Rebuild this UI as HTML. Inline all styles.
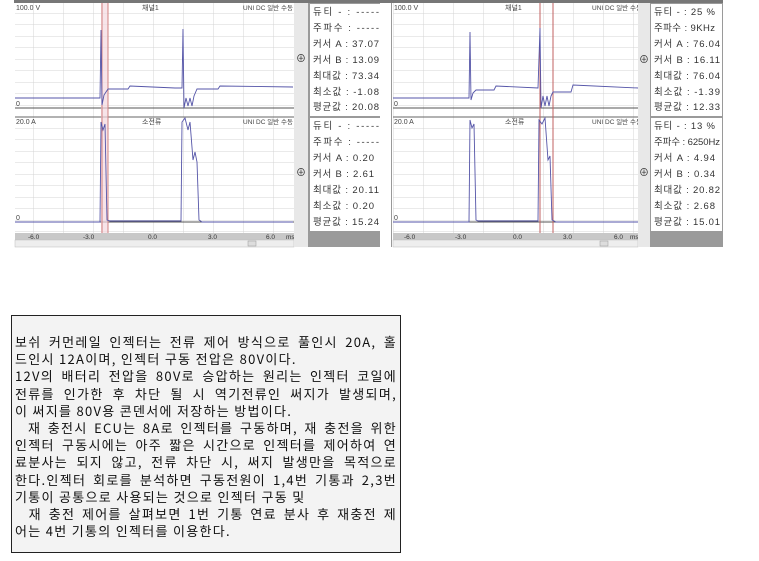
<!DOCTYPE html>
<html><head><meta charset="utf-8"><style>
body{margin:0;background:#fff;width:759px;height:561px;overflow:hidden;font-family:"Liberation Sans","Noto Sans CJK KR",sans-serif}
#tb{position:absolute;left:11px;top:315px;width:390px;height:238px;border:1px solid #222;background:#f3f3f3;box-sizing:border-box;padding:17px 3px 0 3px}
#tb div{font-family:"Noto Sans CJK KR",sans-serif;font-size:13px;line-height:17.2px;height:17.2px;text-align:justify;text-align-last:justify;white-space:nowrap;color:#111;letter-spacing:1.3px}
#tb div.l{text-align-last:left}
</style></head><body>
<svg width="759" height="250" style="position:absolute;left:0;top:0" font-family="Liberation Sans, Noto Sans CJK KR, sans-serif">
<defs>
<pattern id="g" x="3" y="1.5" width="30" height="11.5" patternUnits="userSpaceOnUse"><path d="M0 0H30M0 0V11.5" stroke="#d4d4d4" stroke-width="1" fill="none"/></pattern>
</defs>
<rect x="14" y="0" width="366" height="3" fill="#777"/>
<rect x="15" y="3" width="279" height="230" fill="#fff"/>
<rect x="15" y="3" width="279" height="230" fill="url(#g)"/>
<line x1="15" y1="117" x2="294" y2="117" stroke="#666"/>
<line x1="15" y1="108" x2="294" y2="108" stroke="#555"/>
<line x1="15" y1="222" x2="294" y2="222" stroke="#555"/>
<rect x="101" y="3" width="7" height="230" fill="#f4d8e0" opacity=".7"/>
<line x1="102" y1="3" x2="102" y2="233" stroke="#d08080"/>
<line x1="108" y1="3" x2="108" y2="233" stroke="#d08080"/>
<text x="16" y="10" font-size="7" fill="#444">100.0 V</text>
<text x="142" y="10" font-size="7" fill="#444">채널1</text>
<text x="243" y="10" font-size="6.5" fill="#444">UNI DC 일반 수동</text>
<text x="16" y="124" font-size="7" fill="#444">20.0 A</text>
<text x="142" y="124" font-size="7" fill="#444">소전류</text>
<text x="243" y="124" font-size="6.5" fill="#444">UNI DC 일반 수동</text>
<text x="16" y="106" font-size="7" fill="#444">0</text>
<text x="16" y="220" font-size="7" fill="#444">0</text>
<polyline fill="none" stroke="#5555a8" stroke-width=".9" points="15,98 100,98 101,30 102,105 104,95 108,89 128,89 130,86 175,88 182,88 183,29 184,108 186,98 188,106 190,98 192,106 194,96 197,89 218,89 220,86 293,87"/>
<polyline fill="none" stroke="#5555a8" stroke-width=".9" points="15,222 100,222 101,122 103,130 105,124 107,220 110,221 181,221 182,122 185,118 188,130 190,122 193,160 195,152 197,162 199,220 202,222 293,222"/>
<rect x="15" y="233" width="279" height="7" fill="#c8c8c8"/>
<g font-size="6.5" fill="#333"><text x="28" y="239">-6.0</text><text x="83" y="239">-3.0</text><text x="148" y="239">0.0</text><text x="208" y="239">3.0</text><text x="266" y="239">6.0</text><text x="286" y="239">ms</text></g>
<rect x="15" y="240" width="279" height="7" fill="#eee" stroke="#bbb" stroke-width=".5"/>
<rect x="248" y="241" width="8" height="5" fill="#ddd" stroke="#999" stroke-width=".5"/>
<rect x="294" y="3" width="15" height="244" fill="#e8e8e8"/>
<text x="296" y="62" font-size="10" fill="#333">⊕</text>
<text x="296" y="176" font-size="10" fill="#333">⊕</text>
<rect x="308" y="3" width="73" height="244" fill="#9a9a9a"/>
<rect x="310" y="4" width="70" height="112" fill="#fff"/>
<rect x="310" y="118" width="70" height="113" fill="#fff"/>
<g font-size="9.5" fill="#333" lengthAdjust="spacing">
<text x="313" y="15" textLength="66">듀티 - : -----</text><text x="313" y="31" textLength="66">주파수 : -----</text><text x="313" y="47" textLength="66">커서 A : 37.07</text><text x="313" y="63" textLength="66">커서 B : 13.09</text><text x="313" y="79" textLength="66">최대값 : 73.34</text><text x="313" y="95" textLength="66">최소값 : -1.08</text><text x="313" y="110" textLength="66">평균값 : 20.08</text>
<text x="313" y="129" textLength="66">듀티 - : -----</text><text x="313" y="145" textLength="66">주파수 : -----</text><text x="313" y="161" textLength="61">커서 A : 0.20</text><text x="313" y="177" textLength="61">커서 B : 2.61</text><text x="313" y="193" textLength="66">최대값 : 20.11</text><text x="313" y="209" textLength="61">최소값 : 0.20</text><text x="313" y="225" textLength="66">평균값 : 15.24</text>
</g>
<rect x="380" y="0" width="343" height="3" fill="#777"/>
<rect x="380" y="3" width="12" height="244" fill="#fff"/>
<line x1="391.5" y1="3" x2="391.5" y2="247" stroke="#999"/>
<rect x="393" y="3" width="245" height="230" fill="#fff"/>
<rect x="393" y="3" width="245" height="230" fill="url(#g)"/>
<line x1="393" y1="117" x2="638" y2="117" stroke="#666"/>
<line x1="393" y1="108" x2="638" y2="108" stroke="#555"/>
<line x1="393" y1="222" x2="638" y2="222" stroke="#555"/>
<line x1="540" y1="3" x2="540" y2="233" stroke="#c06060"/>
<line x1="553" y1="3" x2="553" y2="233" stroke="#c06060"/>
<text x="394" y="10" font-size="7" fill="#444">100.0 V</text>
<text x="505" y="10" font-size="7" fill="#444">채널1</text>
<text x="592" y="10" font-size="6.5" fill="#444">UNI DC 일반 수동</text>
<text x="394" y="124" font-size="7" fill="#444">20.0 A</text>
<text x="505" y="124" font-size="7" fill="#444">소전류</text>
<text x="592" y="124" font-size="6.5" fill="#444">UNI DC 일반 수동</text>
<text x="394" y="106" font-size="7" fill="#444">0</text>
<text x="394" y="220" font-size="7" fill="#444">0</text>
<polyline fill="none" stroke="#5555a8" stroke-width=".9" points="393,98 469,98 470,32 471,100 473,93 476,90 494,90 496,86 538,88 540,28 541,108 543,96 545,106 547,96 549,106 551,96 553,92 571,92 573,85 638,88"/>
<polyline fill="none" stroke="#5555a8" stroke-width=".9" points="393,222 469,222 470,120 472,128 474,124 476,220 478,221 538,221 539,120 542,124 545,118 548,160 550,156 552,220 556,222 638,222"/>
<rect x="393" y="233" width="245" height="7" fill="#c8c8c8"/>
<g font-size="6.5" fill="#333"><text x="404" y="239">-6.0</text><text x="455" y="239">-3.0</text><text x="513" y="239">0.0</text><text x="563" y="239">3.0</text><text x="614" y="239">6.0</text><text x="630" y="239">ms</text></g>
<rect x="393" y="240" width="245" height="7" fill="#eee" stroke="#bbb" stroke-width=".5"/>
<rect x="600" y="241" width="8" height="5" fill="#ddd" stroke="#999" stroke-width=".5"/>
<rect x="638" y="3" width="12" height="244" fill="#e8e8e8"/>
<text x="639" y="63" font-size="10" fill="#333">⊕</text>
<text x="639" y="176" font-size="10" fill="#333">⊕</text>
<rect x="650" y="3" width="73" height="244" fill="#9a9a9a"/>
<rect x="651" y="4" width="71" height="112" fill="#fff"/>
<rect x="651" y="118" width="71" height="113" fill="#fff"/>
<g font-size="9.5" fill="#333" lengthAdjust="spacing">
<text x="654" y="15" textLength="61">듀티 - : 25 %</text><text x="654" y="31" textLength="61">주파수 : 9KHz</text><text x="654" y="47" textLength="66">커서 A : 76.04</text><text x="654" y="63" textLength="66">커서 B : 16.11</text><text x="654" y="79" textLength="66">최대값 : 76.04</text><text x="654" y="95" textLength="66">최소값 : -1.39</text><text x="654" y="110" textLength="66">평균값 : 12.33</text>
<text x="654" y="129" textLength="61">듀티 - : 13 %</text><text x="654" y="145" textLength="66">주파수 : 6250Hz</text><text x="654" y="161" textLength="61">커서 A : 4.94</text><text x="654" y="177" textLength="61">커서 B : 0.34</text><text x="654" y="193" textLength="66">최대값 : 20.82</text><text x="654" y="209" textLength="61">최소값 : 2.68</text><text x="654" y="225" textLength="66">평균값 : 15.01</text>
</g>
</svg>
<div id="tb">
<div>보쉬 커먼레일 인젝터는 전류 제어 방식으로 풀인시 20A, 홀</div>
<div class="l">드인시 12A이며, 인젝터 구동 전압은 80V이다.</div>
<div>12V의 배터리 전압을 80V로 승압하는 원리는 인젝터 코일에</div>
<div>전류를 인가한 후 차단 될 시 역기전류인 써지가 발생되며,</div>
<div class="l">이 써지를 80V용 콘덴서에 저장하는 방법이다.</div>
<div>&nbsp; 재 충전시 ECU는 8A로 인젝터를 구동하며, 재 충전을 위한</div>
<div>인젝터 구동시에는 아주 짧은 시간으로 인젝터를 제어하여 연</div>
<div>료분사는 되지 않고, 전류 차단 시, 써지 발생만을 목적으로</div>
<div>한다.인젝터 회로를 분석하면 구동전원이 1,4번 기통과 2,3번</div>
<div class="l">기통이 공통으로 사용되는 것으로 인젝터 구동 및</div>
<div>&nbsp; 재 충전 제어를 살펴보면 1번 기통 연료 분사 후 재충전 제</div>
<div class="l">어는 4번 기통의 인젝터를 이용한다.</div>
</div>
</body></html>
